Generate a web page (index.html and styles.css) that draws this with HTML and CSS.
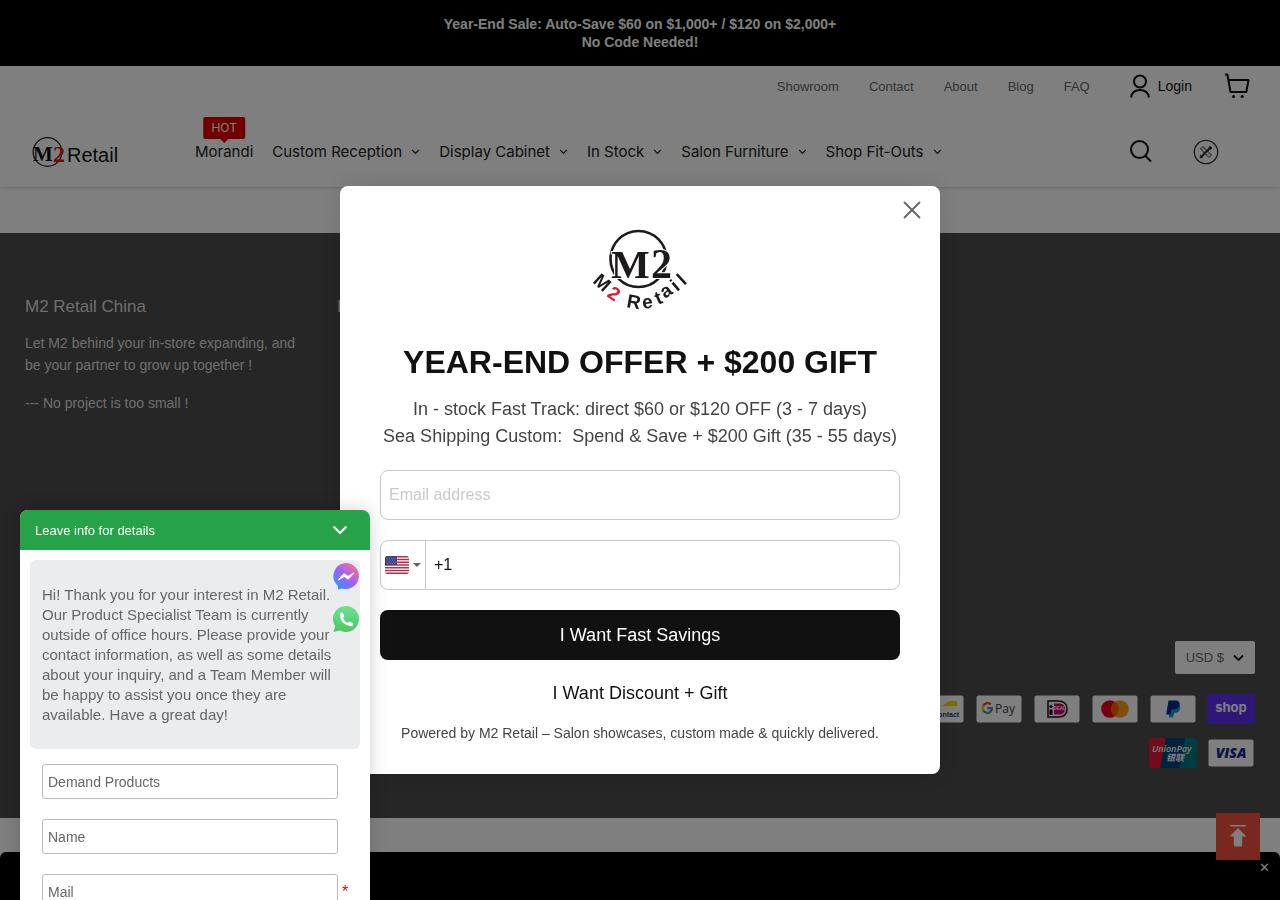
FILE: index.html
```html
<!DOCTYPE html>
<html lang="en">
<head>
<meta charset="utf-8">
<meta name="viewport" content="width=device-width, initial-scale=1">
<title>M2 Retail</title>
<link rel="stylesheet" href="styles.css">
</head>
<body>
<svg class="defs" aria-hidden="true">
  <symbol id="chev" viewBox="0 0 8 6"><path d="M.7 1 4 4.400 7.300 1" fill="none" stroke="currentColor" stroke-width="1.100"/></symbol>
</svg>

<div class="promo">
  <p>Year-End Sale: Auto-Save $60 on $1,000+ / $120 on $2,000+</p>
  <p>No Code Needed!</p>
</div>

<header class="header">
  <div class="topbar">
    <nav class="links" aria-label="Secondary">
      <a href="#">Showroom</a><a href="#">Contact</a><a href="#">About</a><a href="#">Blog</a><a href="#">FAQ</a>
    </nav>
    <a class="login" href="#">
      <svg width="20" height="24" viewBox="0 0 20 24" fill="none" stroke="currentColor" stroke-width="2"><circle cx="10" cy="7.500" r="6"/><path d="M1 23.500c.8-5 4.300-7.500 9-7.500s8.200 2.500 9 7.500"/></svg>
      <span>Login</span>
    </a>
    <a class="cart" href="#" aria-label="Cart">
      <svg width="26" height="26" viewBox="0 0 26 26" fill="none" stroke="currentColor" stroke-width="2"><path d="M1 1.500h2.400L6.500 19h15.800L24.500 7H4.500" stroke-linejoin="round"/><circle cx="9.500" cy="23.500" r="1.600" fill="currentColor" stroke="none"/><circle cx="18.200" cy="23.500" r="1.600" fill="currentColor" stroke="none"/></svg>
    </a>
  </div>
  <div class="mainbar">
    <a class="logo" href="#" aria-label="M2 Retail">
      <svg width="88" height="32" viewBox="0 0 88 32">
        <circle cx="15.500" cy="16" r="14.300" fill="none" stroke="#222" stroke-width="1.300"/>
        <text x="1" y="25" class="serif" font-size="21" fill="#111">M</text>
        <text x="21" y="26" class="serif" font-size="24" fill="#e0101c">2</text>
        <text x="35" y="26" class="sans" font-size="20" fill="#111">Retail</text>
      </svg>
    </a>
    <nav class="menu" aria-label="Main">
      <a href="#"><span class="hot">HOT</span>Morandi</a>
      <a href="#">Custom Reception <svg><use href="#chev"/></svg></a>
      <a href="#">Display Cabinet <svg><use href="#chev"/></svg></a>
      <a href="#">In Stock <svg><use href="#chev"/></svg></a>
      <a href="#">Salon Furniture <svg><use href="#chev"/></svg></a>
      <a href="#">Shop Fit-Outs <svg><use href="#chev"/></svg></a>
    </nav>
    <button class="icon-btn search" aria-label="Search">
      <svg width="22" height="24" viewBox="0 0 22 24" fill="none" stroke="currentColor" stroke-width="2"><circle cx="9.500" cy="9.500" r="8.500"/><path d="m15.500 16 5.500 5.500"/></svg>
    </button>
    <button class="icon-btn" aria-label="Design">
      <svg width="26" height="26" viewBox="0 0 26 26" fill="none" stroke="#333"><circle cx="13" cy="13" r="11.700" stroke-width="1.300"/><path d="m7.500 10 2.500-2.500 8.500 8.500-2.500 2.500zM11 9.500l-1 1M13 11.500l-1 1M16 14.500l-1 1" stroke-width="1"/><path d="m8.500 17.500 8-8" stroke-width="2.200"/><path d="m7 19 .8-2.800 2 2z" fill="#111"/><circle cx="17.200" cy="9" r="1.300" fill="#111"/></svg>
    </button>
  </div>
</header>

<main class="main"></main>

<footer class="footer">
  <div class="cols">
    <section>
      <h2>M2 Retail China</h2>
      <p>Let M2 behind your in-store expanding, and be your partner to grow up together !</p>
      <p>--- No project is too small !</p>
    </section>
    <section><h2>Information</h2></section>
  </div>
  <div class="foot-end">
    <button class="currency">USD $ <svg width="11" height="8" viewBox="0 0 11 8" fill="none" stroke="#111" stroke-width="1.800"><path d="m1 1.500 4.500 4.500L10 1.500"/></svg></button>
    <div class="pays">
      <svg class="pay" viewBox="0 0 48 30" role="img" aria-label="Bancontact"><rect x="1.500" y="1.500" width="45" height="27" rx="2" fill="#fff"/><path d="M23 12c6 0 5-5 12-5h5v5z" fill="#ffd800"/><path d="M23 12c-6 0-7 5-16 5v-5z" fill="#005498"/><text x="4" y="23" class="sans" font-size="7" font-weight="bold" fill="#1e3764">Bancontact</text></svg>
      <svg class="pay" viewBox="0 0 48 30" role="img" aria-label="Google Pay"><rect x="1.500" y="1.500" width="45" height="27" rx="2" fill="#fff"/><g fill="none" stroke-width="2.300"><path d="M8.300 12a4.600 4.600 0 0 1 7.500-1.600" stroke="#ea4335"/><path d="M8.300 16.500a4.600 4.600 0 0 1 0-4.500" stroke="#fbbc04"/><path d="M8.300 16.300a4.600 4.600 0 0 0 7 1.500" stroke="#34a853"/><path d="M12.300 14.200h4.600a4.600 4.600 0 0 1-1.600 3.600" stroke="#4285f4"/></g><text x="20" y="19" class="pay-text" font-size="12" fill="#3c4043">Pay</text></svg>
      <svg class="pay" viewBox="0 0 48 30" role="img" aria-label="iDEAL"><rect x="1.500" y="1.500" width="45" height="27" rx="2" fill="#fff"/><path d="M15 7h10c7 0 9 4 9 8s-2 8-9 8H15z" fill="none" stroke="#111" stroke-width="1.500"/><path d="M21 9.500h4c5 0 7 2 7 5.500s-2 5.500-7 5.500h-4z" fill="#d50072"/><circle cx="18" cy="12.500" r="1.600" fill="#111"/><path d="M16.500 15.500h3v5.500h-3z" fill="#111"/><text x="20.500" y="16" class="sans" font-size="4.500" font-weight="bold" fill="#fff">DEAL</text></svg>
      <svg class="pay" viewBox="0 0 48 30" role="img" aria-label="Mastercard"><rect x="1.500" y="1.500" width="45" height="27" rx="2" fill="#fff"/><circle cx="19" cy="15" r="8.800" fill="#eb001b"/><circle cx="29" cy="15" r="8.800" fill="#f79e1b"/><path d="M24 7.700a8.800 8.800 0 0 1 0 14.600 8.800 8.800 0 0 1 0-14.600z" fill="#ff5f00"/></svg>
      <svg class="pay" viewBox="0 0 48 30" role="img" aria-label="PayPal"><rect x="1.500" y="1.500" width="45" height="27" rx="2" fill="#fff"/><path d="M20.500 10h8c3 1 3 3 2.500 5-.8 3-3 4-6 4l-.8 4.500H20z" fill="#179bd7"/><path d="M19.500 6.500H26c4 0 5.300 2 4.500 5s-3.300 4-6.500 4h-1.500l-.8 5h-4.500z" fill="#003087"/></svg>
      <svg class="pay" viewBox="0 0 48 30" role="img" aria-label="Shop Pay"><rect width="48" height="30" rx="2" fill="#5a31f4"/><text x="24" y="18" text-anchor="middle" class="shop" font-size="13" fill="#fff">shop</text></svg>
      <svg class="pay" viewBox="0 0 48 30" role="img" aria-label="UnionPay"><rect width="48" height="30" rx="2" fill="#e21836"/><path d="M17 0h31v30H11z" fill="#00447c"/><path d="M36 0h10q2 0 2 2v26q0 2-2 2H31z" fill="#007b84"/><g fill="#fff" font-style="italic"><text x="3" y="13.500" class="pay-text" font-size="9" font-weight="600">UnionPay</text><text x="17" y="23" class="cjk" font-size="9" font-weight="bold">银联</text></g></svg>
      <svg class="pay" viewBox="0 0 48 30" role="img" aria-label="Visa"><rect x="1.500" y="1.500" width="45" height="27" rx="2" fill="#fff"/><text x="24" y="20" text-anchor="middle" class="pay-text" font-style="italic" font-size="14" font-weight="800" fill="#142688">VISA</text></svg>
    </div>
  </div>
</footer>

<div class="bottom-bar"><button aria-label="Dismiss">✕</button></div>
<button class="to-top" aria-label="Back to top">
  <svg width="18" height="24" viewBox="0 0 18 24" fill="#fff"><path d="M1 0h16v1.500H1zM9 3l8.500 8.500h-4.300V20q0 1.500-1.500 1.500H6.300q-1.500 0-1.500-1.500v-8.500H.5z"/></svg>
</button>

<div class="overlay">
  <form class="modal" role="dialog" aria-label="Year-end offer">
    <button type="button" class="close" aria-label="Close"><svg width="18" height="18" viewBox="0 0 18 18" stroke="#63636b" stroke-width="1.800" stroke-linecap="round"><path d="m1.500 1.500 15 15M16.500 1.500l-15 15"/></svg></button>
    <svg class="brand" width="120" height="96" viewBox="0 0 120 96" role="img" aria-label="M2 Retail">
      <circle cx="58.500" cy="37" r="28" fill="none" stroke="#1d1a1a" stroke-width="2.600"/>
      <text x="31" y="56" class="serif" font-size="41" fill="#1d1a1a" stroke="#fff" stroke-width="2" paint-order="stroke">M</text>
      <text x="71" y="56" class="serif" font-size="42" fill="#1d1a1a" stroke="#fff" stroke-width="2" paint-order="stroke">2</text>
      <text class="sans" font-size="19" font-weight="bold" fill="#1d1a1a" x="12 26 38 46 63 78 85 97 104" y="60 74 82 85 87 83 77 70 64" rotate="42 34 20 10 -8 -24 -34 -40 -42">M<tspan fill="#e0182a">2</tspan> Retail</text>
    </svg>
    <h1>YEAR-END OFFER + $200 GIFT</h1>
    <p class="lead">In - stock Fast Track: direct $60 or $120 OFF (3 - 7 days)<br>Sea Shipping Custom:&nbsp; Spend &amp; Save + $200 Gift (35 - 55 days)</p>
    <input class="field" type="email" placeholder="Email address" aria-label="Email address">
    <div class="field phone">
      <button type="button" class="country" aria-label="Country code">
        <svg width="24" height="18" viewBox="0 0 24 18"><clipPath id="fr"><rect width="24" height="18" rx="2.500"/></clipPath><g clip-path="url(#fr)"><path fill="#fff" d="M0 0h24v18H0z"/><path d="M0 .7h24M0 3.500h24M0 6.200h24M0 9h24M0 11.800h24M0 14.500h24M0 17.300h24" stroke="#b22d47" stroke-width="1.400"/><path fill="#3a3f7c" d="M0 0h12v9H0z"/><path d="M1.500 2h10M2.500 4h9M1.500 6h10M2.500 7.700h9" stroke="#cdd0ea" stroke-width=".7" stroke-dasharray=".8 1.500"/></g></svg>
        <svg width="8" height="4" viewBox="0 0 8 4" fill="#666"><path d="M0 0h8L4 4z"/></svg>
      </button>
      <input type="tel" value="+1" aria-label="Phone number">
    </div>
    <button type="submit" class="primary">I Want Fast Savings</button>
    <button type="button" class="secondary">I Want Discount + Gift</button>
    <p class="small">Powered by M2 Retail – Salon showcases, custom made &amp; quickly delivered.</p>
  </form>
</div>

<aside class="chat">
  <div class="chat-head"><span>Leave info for details</span><button aria-label="Minimise"><svg width="16" height="10" viewBox="0 0 16 10" fill="none" stroke="#fff" stroke-width="2"><path d="m1.500 1.500 6.500 6.500 6.500-6.500"/></svg></button></div>
  <div class="chat-body">
    <p class="message">Hi! Thank you for your interest in M2 Retail. Our Product Specialist Team is currently outside of office hours. Please provide your contact information, as well as some details about your inquiry, and a Team Member will be happy to assist you once they are available. Have a great day!</p>
    <div class="row"><input placeholder="Demand Products" aria-label="Demand Products"></div>
    <div class="row"><input placeholder="Name" aria-label="Name"></div>
    <div class="row"><input placeholder="Mail" aria-label="Mail" required><span class="req">*</span></div>
  </div>
  <div class="social">
    <a href="#" aria-label="Messenger"><svg width="28" height="28" viewBox="0 0 28 28"><defs><linearGradient id="ms" x1="0" y1="1" x2=".9" y2="0"><stop offset="0" stop-color="#16a5ff"/><stop offset=".5" stop-color="#9a62f6"/><stop offset="1" stop-color="#ff7288"/></linearGradient></defs><path d="M14 1a13 13 0 1 1-4 25.400L6 27.600l-.3-4A13 13 0 0 1 14 1z" fill="url(#ms)"/><path d="m6.500 18 4.500-5.500q1-1.300 2.200-.3l2.600 2.200L22 11l-4.800 5.300q-1 1.300-2.200.3l-2.800-2.200z" fill="#fff" stroke="#fff" stroke-linejoin="round"/></svg></a>
    <a href="#" aria-label="WhatsApp"><svg width="28" height="28" viewBox="0 0 28 28"><defs><linearGradient id="wa" x1="0" y1="0" x2="0" y2="1"><stop offset="0" stop-color="#6fe094"/><stop offset="1" stop-color="#4bc764"/></linearGradient></defs><path d="M14 1a13 13 0 1 1-6.300 24.400L1.500 27l1.700-5.800A13 13 0 0 1 14 1z" fill="url(#wa)"/><path d="M9.500 9.500c-.5 6 4 10.500 9.500 10" fill="none" stroke="#fff" stroke-width="2.400"/><path d="m9.500 9.500 1 1.500M17.500 18.500l2 .8" stroke="#fff" stroke-width="3.600" stroke-linecap="round"/></svg></a>
  </div>
</aside>
</body>
</html>
```

FILE: styles.css
```css
* { box-sizing: border-box; }
body { margin: 0; font-family: "Liberation Sans", Arial, sans-serif; background: #fff; color: #333; }
a { color: inherit; text-decoration: none; }
button { font: inherit; color: inherit; border: 0; padding: 0; background: none; cursor: pointer; }
p, h1, h2 { margin: 0; }
svg { display: block; flex: none; }
.defs { position: absolute; width: 0; height: 0; }
.serif { font-family: "Liberation Serif", "Times New Roman", serif; font-weight: bold; }
.sans { font-family: "Liberation Sans", Arial, sans-serif; }
.cjk { font-family: "Noto Sans CJK SC", sans-serif; }
.pay-text { font-family: "Open Sans", sans-serif; }
.shop { font-family: Inter, sans-serif; font-weight: 700; }

.promo { background: #000; color: #fff; font-size: 14px; font-weight: bold; line-height: 18px; text-align: center; padding: 15px 20px; }
.header { position: relative; background: #fff; box-shadow: 0 1px 3px rgba(0, 0, 0, .2); }
.topbar { display: flex; align-items: center; justify-content: flex-end; height: 40px; padding: 0 30px 0 20px; }
.links { display: flex; gap: 30px; font-size: 13px; color: #666; margin-right: 40px; }
.login { display: flex; align-items: center; gap: 8px; font-size: 14px; color: #111; margin-right: 32px; }
.cart { color: #111; }
.mainbar { display: flex; align-items: center; height: 81px; padding: 11px 61px 0 32px; }
.logo { margin-right: 75px; }
.menu { display: flex; gap: 19px; font: 400 15px/20px Inter, sans-serif; color: #222; flex: 1; }
.menu a { display: flex; align-items: center; gap: 9px; position: relative; white-space: nowrap; }
.menu svg { width: 9px; height: 6px; }
.hot { position: absolute; left: 50%; bottom: 23px; transform: translateX(-50%); background: #e00000; color: #fff; font-size: 12px; line-height: 22px; padding: 0 8px; border-radius: 2px; }
.hot::after { content: ""; position: absolute; left: 50%; top: 100%; margin-left: -4px; border: 4px solid transparent; border-top-color: #e00000; border-bottom: 0; }
.icon-btn { color: #111; }
.search { margin-right: 41px; }
.main { height: 46px; }
.footer { background: #4c4c4c; color: #fff; min-height: 585px; padding: 62px 25px 50px; display: flex; flex-direction: column; justify-content: space-between; }
.cols { display: grid; grid-template-columns: repeat(4, 1fr); gap: 18px; color: #ddd; }
.cols h2 { font-size: 17px; font-weight: normal; line-height: 24px; margin-bottom: 13px; }
.cols p { font-size: 14px; line-height: 22px; margin-bottom: 16px; padding-right: 16px; }
.foot-end { display: flex; flex-direction: column; align-items: flex-end; gap: 20px; }
.currency { display: flex; align-items: center; gap: 9px; background: #fff; color: #666; font-size: 13px; height: 33px; padding: 0 11px; border-radius: 2px; }
.pays { display: flex; flex-wrap: wrap; justify-content: flex-end; gap: 14px 10px; width: 360px; }
.pay { width: 48px; height: 30px; }

.bottom-bar { position: fixed; inset: auto 0 0; height: 48px; background: #000; border-radius: 6px 6px 0 0; }
.bottom-bar button { position: absolute; right: 10px; top: 8px; color: #fff; font-size: 13px; line-height: 16px; }
.to-top { position: fixed; right: 20px; bottom: 40px; width: 44px; height: 47px; background: #f0503a; display: grid; place-items: center; }

.overlay { position: fixed; inset: 0; background: rgba(0, 0, 0, .5); display: flex; align-items: center; justify-content: center; padding-top: 60px; }
.modal { position: relative; width: 600px; max-width: 100%; background: #fff; border-radius: 8px; padding: 36px 40px 31px; display: flex; flex-direction: column; align-items: center; text-align: center; box-shadow: 0 0 24px rgba(0, 0, 0, .12); }
.close { position: absolute; right: 19px; top: 15px; }
.modal h1 { font-size: 32px; line-height: 40px; color: #111; margin: 24px 0 14px; }
.lead { font-size: 18px; line-height: 27px; color: #444; margin-bottom: 20px; }
.field { width: 100%; height: 50px; border: 1px solid #c8c8cb; border-radius: 8px; background: #fff; padding: 0 8px; font: 16px "Liberation Sans", Arial, sans-serif; margin-bottom: 20px; }
.field::placeholder { color: #c9c9ce; }
.phone { display: flex; padding: 0; overflow: hidden; }
.country { display: flex; align-items: center; gap: 4px; padding: 0 4px; border-right: 1px solid #c8c8cb; }
.phone input { flex: 1; border: 0; padding: 0 8px; font: inherit; color: #111; background: none; }
.primary, .secondary { width: 100%; font-size: 18px; height: 50px; border-radius: 8px; }
.primary { background: #111; color: #fff; }
.secondary { color: #111; height: 66px; }
.small { font-size: 14px; line-height: 20px; color: #444; margin-top: -3px; }

.chat { position: fixed; left: 20px; bottom: 0; width: 350px; height: 390px; background: #fff; border-radius: 8px 8px 0 0; box-shadow: 0 0 18px rgba(0, 0, 0, .18); }
.chat-head { display: flex; align-items: center; justify-content: space-between; height: 40px; padding: 0 22px 0 15px; background: #26a248; color: #fff; font-size: 13px; border-radius: 8px 8px 0 0; }
.chat-body { height: 350px; overflow: hidden; padding: 10px; }
.message { background: #ebecee; color: #666; font-size: 15px; line-height: 20px; padding: 25px 12px 24px; border-radius: 6px; margin-bottom: 15px; }
.row { display: flex; align-items: center; gap: 4px; padding-left: 12px; margin-bottom: 20px; }
.row input { width: 296px; height: 35px; border: 1px solid #bbb; border-radius: 3px; padding: 0 5px; font: 14px "Liberation Sans", Arial, sans-serif; }
.row input::placeholder { color: #666; }
.req { color: #d00; font-size: 16px; }
.social { position: absolute; top: 52px; right: 10px; display: grid; gap: 15px; }
```
